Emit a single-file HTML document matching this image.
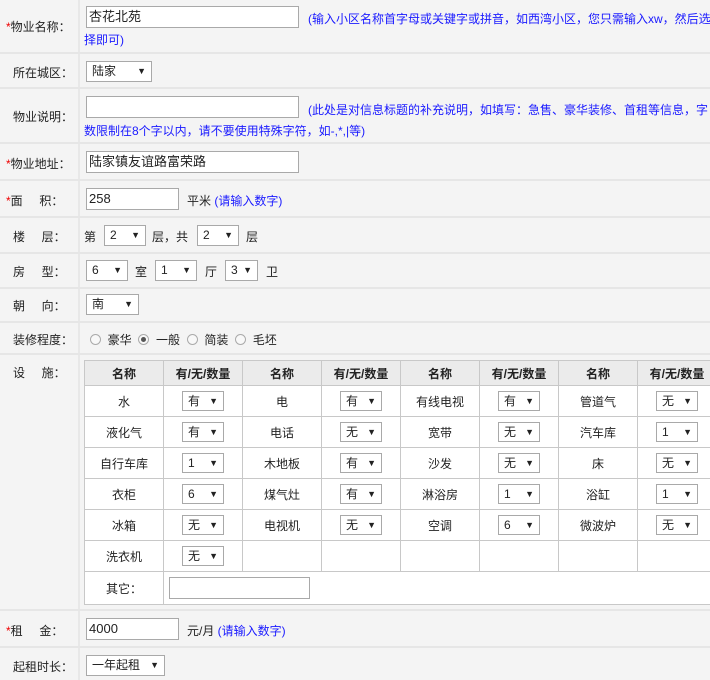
<!DOCTYPE html>
<html><head><meta charset="utf-8"><style>
*{margin:0;padding:0;box-sizing:border-box}
body{width:710px;height:680px;overflow:hidden;background:#f4f4f4;font:12px "Liberation Sans","Noto Sans CJK SC",sans-serif;color:#222;position:relative}
.a{position:absolute;white-space:nowrap}
.hl{position:absolute;left:0;width:710px;height:2px;background:#e6e6e6}
.vl{position:absolute;left:78px;top:0;width:2px;height:680px;background:#e8e8e8}
.in{position:absolute;background:#fff;border:1px solid #a9a9a9;height:22px;line-height:20px;padding-left:2px;font-size:13px}
.sel{position:absolute;background:#fff;border:1px solid #a9a9a9;height:21px;line-height:19px;padding-left:5px;font-size:12px}
.sel:after{content:"▼";position:absolute;right:5px;top:0;font-size:9px}
.b{color:#1a1aff}
.r{color:#e00}
.rad{display:inline-block;width:11px;height:11px;border:1px solid #aaa;border-radius:50%;background:#f8f8f8;vertical-align:-1px;position:relative}
.rad.on:after{content:"";position:absolute;left:2px;top:2px;width:5px;height:5px;border-radius:50%;background:#555}
table{position:absolute;left:84px;top:360px;width:632px;border-collapse:collapse;table-layout:fixed;background:#fff}
td,th{border:1px solid #c8c8c8;width:79px;text-align:center;height:31px;font-size:12px;position:relative;white-space:nowrap;overflow:hidden}
th{height:25px;background:#ebebeb;font-weight:bold}
td .s{display:inline-block;position:relative;width:42px;height:20px;border:1px solid #a9a9a9;text-align:left;padding-left:5px;line-height:18px;background:#fff;vertical-align:middle}
td .s:after{content:"▼";position:absolute;right:5px;top:0;font-size:9px}
</style></head><body>
<div class="vl"></div>
<div class="hl" style="top:52px"></div><div class="hl" style="top:87px"></div><div class="hl" style="top:142px"></div><div class="hl" style="top:179px"></div><div class="hl" style="top:216px"></div><div class="hl" style="top:252px"></div><div class="hl" style="top:287px"></div><div class="hl" style="top:321px"></div><div class="hl" style="top:353px"></div><div class="hl" style="top:609px"></div><div class="hl" style="top:646px"></div>

<div class="a" style="left:6px;top:18px"><span class="r">*</span>物业名称：</div>
<div class="in" style="left:86px;top:6px;width:213px">杏花北苑</div>
<div class="a b" style="left:308px;top:10px">(输入小区名称首字母或关键字或拼音，如西湾小区，您只需输入xw，然后选</div>
<div class="a b" style="left:84px;top:31px">择即可)</div>

<div class="a" style="left:13px;top:64px">所在城区：</div>
<div class="sel" style="left:86px;top:61px;width:66px">陆家</div>

<div class="a" style="left:13px;top:108px">物业说明：</div>
<div class="in" style="left:86px;top:96px;width:213px"></div>
<div class="a b" style="left:308px;top:101px">(此处是对信息标题的补充说明，如填写：急售、豪华装修、首租等信息，字</div>
<div class="a b" style="left:84px;top:122px">数限制在8个字以内，请不要使用特殊字符，如-,*,|等)</div>

<div class="a" style="left:6px;top:155px"><span class="r">*</span>物业地址：</div>
<div class="in" style="left:86px;top:151px;width:213px">陆家镇友谊路富荣路</div>

<div class="a" style="left:6px;top:192px"><span class="r">*</span>面&nbsp;&nbsp;&nbsp;&nbsp;&nbsp;积：</div>
<div class="in" style="left:86px;top:188px;width:93px">258</div>
<div class="a" style="left:187px;top:192px">平米 <span class="b">(请输入数字)</span></div>

<div class="a" style="left:13px;top:228px">楼&nbsp;&nbsp;&nbsp;&nbsp;&nbsp;层：</div>
<div class="a" style="left:84px;top:228px">第</div>
<div class="sel" style="left:104px;top:225px;width:42px">2</div>
<div class="a" style="left:152px;top:228px">层，共</div>
<div class="sel" style="left:197px;top:225px;width:42px">2</div>
<div class="a" style="left:246px;top:228px">层</div>

<div class="a" style="left:13px;top:263px">房&nbsp;&nbsp;&nbsp;&nbsp;&nbsp;型：</div>
<div class="sel" style="left:86px;top:260px;width:42px">6</div>
<div class="a" style="left:135px;top:263px">室</div>
<div class="sel" style="left:155px;top:260px;width:42px">1</div>
<div class="a" style="left:205px;top:263px">厅</div>
<div class="sel" style="left:225px;top:260px;width:33px">3</div>
<div class="a" style="left:266px;top:263px">卫</div>

<div class="a" style="left:13px;top:297px">朝&nbsp;&nbsp;&nbsp;&nbsp;&nbsp;向：</div>
<div class="sel" style="left:86px;top:294px;width:53px">南</div>

<div class="a" style="left:13px;top:331px">装修程度：</div>
<div class="a" style="left:90px;top:331px"><span class="rad"></span>&nbsp;&nbsp;豪华&nbsp;&nbsp;<span class="rad on"></span>&nbsp;&nbsp;一般&nbsp;&nbsp;<span class="rad"></span>&nbsp;&nbsp;简装&nbsp;&nbsp;<span class="rad"></span>&nbsp;&nbsp;毛坯</div>

<div class="a" style="left:13px;top:364px">设&nbsp;&nbsp;&nbsp;&nbsp;&nbsp;施：</div>
<table>
<colgroup><col style="width:79px"><col style="width:79px"><col style="width:79px"><col style="width:79px"><col style="width:79px"><col style="width:79px"><col style="width:79px"><col style="width:79px"></colgroup>
<tr><th>名称</th><th>有/无/数量</th><th>名称</th><th>有/无/数量</th><th>名称</th><th>有/无/数量</th><th>名称</th><th>有/无/数量</th></tr>
<tr><td>水</td><td><span class="s">有</span></td><td>电</td><td><span class="s">有</span></td><td>有线电视</td><td><span class="s">有</span></td><td>管道气</td><td><span class="s">无</span></td></tr>
<tr><td>液化气</td><td><span class="s">有</span></td><td>电话</td><td><span class="s">无</span></td><td>宽带</td><td><span class="s">无</span></td><td>汽车库</td><td><span class="s">1</span></td></tr>
<tr><td>自行车库</td><td><span class="s">1</span></td><td>木地板</td><td><span class="s">有</span></td><td>沙发</td><td><span class="s">无</span></td><td>床</td><td><span class="s">无</span></td></tr>
<tr><td>衣柜</td><td><span class="s">6</span></td><td>煤气灶</td><td><span class="s">有</span></td><td>淋浴房</td><td><span class="s">1</span></td><td>浴缸</td><td><span class="s">1</span></td></tr>
<tr><td>冰箱</td><td><span class="s">无</span></td><td>电视机</td><td><span class="s">无</span></td><td>空调</td><td><span class="s">6</span></td><td>微波炉</td><td><span class="s">无</span></td></tr>
<tr><td>洗衣机</td><td><span class="s">无</span></td><td></td><td></td><td></td><td></td><td></td><td></td></tr>
<tr><td style="height:33px">其它：</td><td colspan="7" style="text-align:left;padding-left:5px"><span style="display:inline-block;width:141px;height:22px;border:1px solid #a9a9a9;vertical-align:middle"></span></td></tr>
</table>

<div class="a" style="left:6px;top:622px"><span class="r">*</span>租&nbsp;&nbsp;&nbsp;&nbsp;&nbsp;金：</div>
<div class="in" style="left:86px;top:618px;width:93px">4000</div>
<div class="a" style="left:187px;top:622px">元/月 <span class="b">(请输入数字)</span></div>

<div class="a" style="left:13px;top:658px">起租时长：</div>
<div class="sel" style="left:86px;top:655px;width:79px">一年起租</div>
</body></html>
